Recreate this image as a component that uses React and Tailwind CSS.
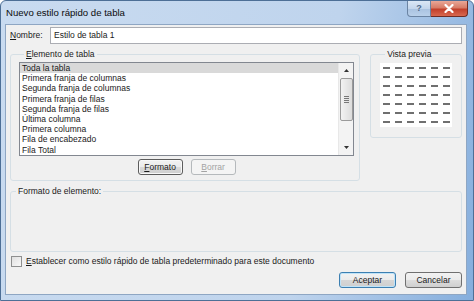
const items = [
  "Toda la tabla",
  "Primera franja de columnas",
  "Segunda franja de columnas",
  "Primera franja de filas",
  "Segunda franja de filas",
  "Última columna",
  "Primera columna",
  "Fila de encabezado",
  "Fila Total",
];

function Btn({ children, disabled, primary, focused, className = "" }) {
  return (
    <button
      className={
        "flex h-[16px] items-center justify-center rounded-[3px] border text-[8.5px] leading-none " +
        (disabled
          ? "border-[#b5b9bc] bg-[#f4f4f4] text-[#a3a3a3] "
          : primary
          ? "border-[#3c7fb1] bg-[linear-gradient(to_bottom,#f2f2f2_0%,#ebebeb_50%,#d6d6d6_51%,#cfcfcf_100%)] text-[#1a1a1a] shadow-[inset_0_0_0_1px_#bfe3f8] "
          : focused
          ? "border-[#5c5c5c] bg-[linear-gradient(to_bottom,#f2f2f2_0%,#ebebeb_50%,#d9d9d9_51%,#cfcfcf_100%)] text-[#1a1a1a] shadow-[inset_0_0_0_1px_#f8f8f8] "
          : "border-[#707070] bg-[linear-gradient(to_bottom,#f2f2f2_0%,#ebebeb_50%,#dddddd_51%,#cfcfcf_100%)] text-[#1a1a1a] ") +
        className
      }
    >
      {children}
    </button>
  );
}

function Group({ label, className = "", children }) {
  return (
    <fieldset className={"rounded-[3px] border border-[#d5dfe5] " + className}>
      <legend className="ml-[5px] px-[2px] text-[8.5px] leading-[11px] text-[#1a1a1a]">{label}</legend>
      {children}
    </fieldset>
  );
}

export default function App() {
  return (
    <div className="flex h-[301px] w-[474px] flex-col overflow-hidden rounded-t-[6px] border border-[#4d6f96] bg-[linear-gradient(100deg,#c9dbf0_0%,#bfd4ed_65%,#85aedd_100%)] font-['Liberation_Sans',Arial,sans-serif] text-[#1a1a1a]">
      {/* title bar */}
      <div className="flex h-[23px] shrink-0 items-start">
        <div className="mt-[6px] pl-[5px] text-[9.6px] leading-[12px] text-[#0b0b0b]">
          Nuevo estilo rápido de tabla
        </div>
        <div className="ml-auto mr-[5px] flex">
          <div className="flex h-[16px] w-[24px] items-center justify-center rounded-bl-[4px] border border-t-0 border-[#6b84a3] bg-[linear-gradient(to_bottom,#dbe7f5_0%,#c4d6ec_50%,#a9c2e0_51%,#b9d0ea_100%)] text-[9px] font-bold text-[#50698a]">
            ?
          </div>
          <div className="flex h-[16px] w-[37px] items-center justify-center rounded-br-[4px] border border-l-0 border-t-0 border-[#6f2b22] bg-[linear-gradient(to_bottom,#e9a797_0%,#d77c67_45%,#c2402b_55%,#d8684f_100%)]">
            <svg width="10" height="9" viewBox="0 0 10 9">
              <path d="M1.5 1 L8.5 8 M8.5 1 L1.5 8" stroke="#fff" strokeWidth="2.2" strokeLinecap="round" />
            </svg>
          </div>
        </div>
      </div>

      {/* client area */}
      <div className="mb-[5px] ml-[4px] mr-[6px] flex flex-1 flex-col border border-[#8ea6c3] bg-[#f0f0f0] px-[4px]">
        <div className="mt-[2px] flex items-center">
          <span className="w-[40px] text-[8.5px]">
            <u>N</u>ombre:
          </span>
          <div className="flex h-[17px] flex-1 items-center border border-[#abadb3] bg-white pl-[3px] text-[8.5px]">
            Estilo de tabla 1
          </div>
        </div>

        <div className="mt-[5px] flex items-start gap-[10px]">
          <Group
            label={
              <>
                <u>E</u>lemento de tabla
              </>
            }
            className="w-[351px] pb-[5px] pl-[8px] pr-[5px] pt-[2px]"
          >
            <div className="flex h-[94px] border border-[#828790] bg-white">
              <div className="flex-1 text-[8.5px] leading-[10.2px]">
                {items.map((it, i) => (
                  <div key={it} className={"pl-[2px] " + (i === 0 ? "bg-[#d9d9d9]" : "")}>
                    {it}
                  </div>
                ))}
              </div>
              <div className="flex w-[15px] flex-col items-center border-l border-[#e8e8e8] bg-[#f3f3f3]">
                <div className="flex h-[15px] items-center justify-center">
                  <svg width="5" height="3" viewBox="0 0 5 3">
                    <path d="M0 3 L2.5 0 L5 3 Z" fill="#333" />
                  </svg>
                </div>
                <div className="flex h-[43px] w-[13px] flex-col items-center justify-center gap-[1px] rounded-[2px] border border-[#9a9a9a] bg-[linear-gradient(to_right,#f2f2f2,#dcdcdc)]">
                  <div className="h-px w-[5px] bg-[#777]" />
                  <div className="h-px w-[5px] bg-[#777]" />
                  <div className="h-px w-[5px] bg-[#777]" />
                  <div className="h-px w-[5px] bg-[#777]" />
                </div>
                <div className="mt-auto flex h-[15px] items-center justify-center">
                  <svg width="5" height="3" viewBox="0 0 5 3">
                    <path d="M0 0 L2.5 3 L5 0 Z" fill="#333" />
                  </svg>
                </div>
              </div>
            </div>
            <div className="mt-[3px] flex justify-center gap-[8px]">
              <Btn focused className="w-[45px]">
                <u>F</u>ormato
              </Btn>
              <Btn disabled className="w-[45px]">
                <u>B</u>orrar
              </Btn>
            </div>
          </Group>

          <Group label="Vista previa" className="w-[92px] px-[9px] pb-[10px] pt-[3px]">
            <div className="grid h-[64px] grid-cols-6 grid-rows-7 items-center justify-items-center bg-white">
              {Array.from({ length: 42 }).map((_, i) => (
                <div key={i} className="h-[2px] w-[7px] bg-[#6f6f6f]" />
              ))}
            </div>
          </Group>
        </div>

        <Group label="Formato de elemento:" className="mt-[5px]">
          <div className="h-[54px]" />
        </Group>

        <div className="mt-[4px] flex h-[11px] items-center gap-[4px] pl-[1px] text-[8.5px]">
          <div className="h-[11px] w-[11px] border border-[#8e8f8f] bg-[linear-gradient(135deg,#e0e0e0,#f8f8f8)]" />
          <span>
            <u>E</u>stablecer como estilo rápido de tabla predeterminado para este documento
          </span>
        </div>

        <div className="mt-[5px] flex justify-end gap-[9px]">
          <Btn primary className="w-[57px]">
            Aceptar
          </Btn>
          <Btn className="w-[57px]">Cancelar</Btn>
        </div>
      </div>
    </div>
  );
}
